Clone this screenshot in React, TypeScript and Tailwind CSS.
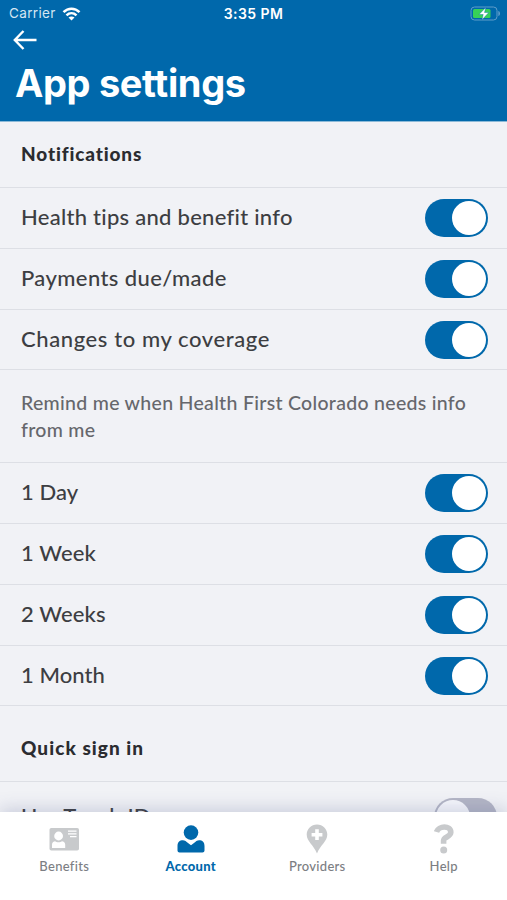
import { useState } from "react";
import type { ReactNode } from "react";
import clsx from "clsx";

type Setting = { id: string; label: string; height: string; spacing: string };

const NOTIFICATIONS: Setting[] = [
  { id: "tips", label: "Health tips and benefit info", height: "h-[61px]", spacing: "tracking-[0.27px]" },
  { id: "payments", label: "Payments due/made", height: "h-[61px]", spacing: "tracking-[0.4px]" },
  { id: "coverage", label: "Changes to my coverage", height: "h-[60px]", spacing: "tracking-[0.6px]" },
];

const REMINDERS: Setting[] = [
  { id: "day", label: "1 Day", height: "h-[61px]", spacing: "tracking-[0.1px]" },
  { id: "week", label: "1 Week", height: "h-[61px]", spacing: "tracking-[0.1px]" },
  { id: "weeks", label: "2 Weeks", height: "h-[61px]", spacing: "tracking-[0.1px]" },
  { id: "month", label: "1 Month", height: "h-[60px]", spacing: "tracking-[0.05px]" },
];

function Toggle({ on, label, onClick }: { on: boolean; label: string; onClick: () => void }) {
  return (
    <button
      role="switch"
      aria-checked={on}
      aria-label={label}
      onClick={onClick}
      className={clsx(
        "flex h-[38px] w-[63px] shrink-0 items-center rounded-full px-[2px]",
        on ? "justify-end bg-[#0068ab]" : "justify-start bg-[#b4b6c6]",
      )}
    >
      <span className={clsx("h-[34px] w-[34px] rounded-full", on ? "bg-white" : "bg-[#f6f7fc]")} />
    </button>
  );
}

function SectionTitle({ children, className }: { children: ReactNode; className: string }) {
  return (
    <h2 className={clsx("flex items-center border-b border-[#dddfe5] px-[21px] text-[19px] font-black text-[#2b2c30]", className)}>
      {children}
    </h2>
  );
}

function StatusBar() {
  return (
    <div className="grid h-[27px] grid-cols-3 items-center px-[9px] font-['Inter',sans-serif] text-[13.5px] text-white">
      <div className="flex items-center gap-[6px]">
        <span className="tracking-[0.35px] text-[#d5e6f2]">Carrier</span>
        <svg width="19" height="14" viewBox="0 0 18 14" fill="none" stroke="white" strokeWidth="2.5">
          <path d="M1 5.2C5.6 .6 12.4 .6 17 5.2" />
          <path d="M4 8.4c2.9-2.8 7.1-2.8 10 0" />
          <path d="M9 13.5 6 10.6c1.7-1.6 4.3-1.6 6 0z" fill="white" stroke="none" />
        </svg>
      </div>
      <span className="text-center text-[14px] font-semibold tracking-[0.45px]">3:35 PM</span>
      <svg className="-mr-[2px] justify-self-end" width="30" height="15" viewBox="0 0 30 15">
        <rect x="1" y="1" width="26" height="13" rx="3.5" fill="none" stroke="#5f9dca" strokeWidth="1" />
        <rect x="3" y="3" width="17.5" height="9" rx="1.5" fill="#37d158" />
        <path d="M28.3 5v5c2.3-.8 2.3-4.2 0-5z" fill="#5f9dca" />
        <path d="M15.800 1.500 9 8.500h4.200L12 13.800 18.800 6.500h-4.300z" fill="white" stroke="#0068ab" strokeWidth=".4" />
      </svg>
    </div>
  );
}

function BenefitsIcon() {
  return (
    <svg width="30" height="24" viewBox="0 0 30 24">
      <rect x=".5" y="1" width="29.5" height="22.5" rx="1.8" fill="#c8cacc" />
      <circle cx="9.6" cy="9" r="4.4" fill="white" />
      <path d="M3 21v-3.5c0-2 1.3-3.3 3.3-3.3.9 1.3 5.5 1.3 6.5 0 2 0 3.4 1.3 3.4 3.3V21z" fill="white" />
      <path d="M19 4.2h8.5M19 6.9h8.5M21 9.6h6.5" stroke="white" strokeWidth="1.2" />
    </svg>
  );
}

function AccountIcon() {
  return (
    <svg width="28" height="28" viewBox="0 0 28 28" fill="#0068ab">
      <circle cx="14" cy="7.6" r="7.3" />
      <path d="M.5 25.4V21c0-3.7 2-5.7 5.5-5.7 1.6 0 2.6.7 3.7 1.7l4.3 3.2 4.3-3.2c1.1-1 2.1-1.7 3.7-1.7 3.500 0 5.500 2 5.500 5.700v4.400c0 1.100-.9 2-2 2h-23c-1.100 0-2-.9-2-2z" />
    </svg>
  );
}

function ProvidersIcon() {
  return (
    <svg width="22" height="30" viewBox="0 0 22 30">
      <path d="M11 .5C5.2.5.7 5 .7 10.6c0 7 7 10.4 10.300 19 3.300-8.600 10.300-12 10.300-19C21.300 5 16.800.5 11 .5z" fill="#c8cacc" />
      <path d="M11 5.3v10.800M5.600 10.700h10.800" stroke="white" strokeWidth="3.6" />
    </svg>
  );
}

function HelpIcon() {
  return (
    <svg width="20" height="30" viewBox="0 0 20 30">
      <path d="M2.500 8C4.500 1.500 16.800 1.200 16.800 8.300c0 4.700-7.200 4.600-7.200 8.300v3.200" fill="none" stroke="#c8cacc" strokeWidth="5.6" />
      <circle cx="9.700" cy="26.100" r="3.500" fill="#c8cacc" />
    </svg>
  );
}

const TABS = [
  { label: "Benefits", icon: <BenefitsIcon /> },
  { label: "Account", icon: <AccountIcon /> },
  { label: "Providers", icon: <ProvidersIcon /> },
  { label: "Help", icon: <HelpIcon /> },
];

export default function App() {
  const [off, setOff] = useState<string[]>(["touch"]);
  const [tab, setTab] = useState("Account");

  const toggle = (id: string) =>
    setOff((ids) => (ids.includes(id) ? ids.filter((i) => i !== id) : [...ids, id]));

  const renderRow = (s: Setting) => (
    <div key={s.id} className={clsx("flex items-center justify-between border-b border-[#dddfe5] pr-[19px] pl-[21px]", s.height)}>
      <span className={clsx("pb-[3px] text-[22px] font-medium text-[#3d3e42]", s.spacing)}>{s.label}</span>
      <Toggle on={!off.includes(s.id)} label={s.label} onClick={() => toggle(s.id)} />
    </div>
  );

  return (
    <div className="flex h-[900px] w-[507px] flex-col overflow-hidden bg-[#f1f2f6] font-['Lato',sans-serif]">
      <header className="h-[122px] shrink-0 border-b border-[#8cbad8] bg-[#0068ab]">
        <StatusBar />
        <button aria-label="Back" className="ml-[13px] flex h-[25px] w-[25px] items-center">
          <svg width="24" height="20" viewBox="0 0 24 20" fill="none" stroke="white" strokeWidth="2.4">
            <path d="M23.5 10H2M10.5 1 1.8 10l8.7 9" />
          </svg>
        </button>
        <h1 className="mt-[7px] ml-[15px] font-['Inter',sans-serif] text-[38px] leading-[48px] font-bold tracking-[-0.35px] text-white">
          App settings
        </h1>
      </header>

      <main className="min-h-0 flex-1 overflow-hidden">
        <SectionTitle className="h-[66px] tracking-[0.85px]">Notifications</SectionTitle>
        {NOTIFICATIONS.map(renderRow)}
        <p className="h-[93px] border-b border-[#dddfe5] pt-[20px] pr-[30px] pl-[21px] text-[19.5px] leading-[26.5px] font-medium tracking-[0.3px] text-[#66676c]">
          Remind me when Health First Colorado needs info from me
        </p>
        {REMINDERS.map(renderRow)}
        <SectionTitle className="h-[76px] pt-[9px] tracking-[1.05px]">Quick sign in</SectionTitle>
        <div className="flex h-[70px] items-start justify-between pt-[16px] pr-[10px] pl-[21px]">
          <span className="pt-[2px] text-[22px] leading-[31px] font-medium tracking-[0.1px] text-[#3d3e42]">Use Touch ID</span>
          <Toggle on={!off.includes("touch")} label="Use Touch ID" onClick={() => toggle("touch")} />
        </div>
      </main>

      <nav className="relative grid h-[88px] shrink-0 grid-cols-4 bg-white pl-px shadow-[0_-3px_16px_rgba(80,90,140,0.25)]">
        {TABS.map((t) => (
          <button
            key={t.label}
            onClick={() => setTab(t.label)}
            className={clsx(
              "flex flex-col items-center pt-[11px] text-[13px] leading-[18px] tracking-[0.3px]",
              tab === t.label ? "font-black text-[#0068ab]" : "font-medium text-[#7c7e83]",
            )}
          >
            <span className="flex h-[32px] items-center">{t.icon}</span>
            <span className="mt-[2px]">{t.label}</span>
          </button>
        ))}
      </nav>
    </div>
  );
}
